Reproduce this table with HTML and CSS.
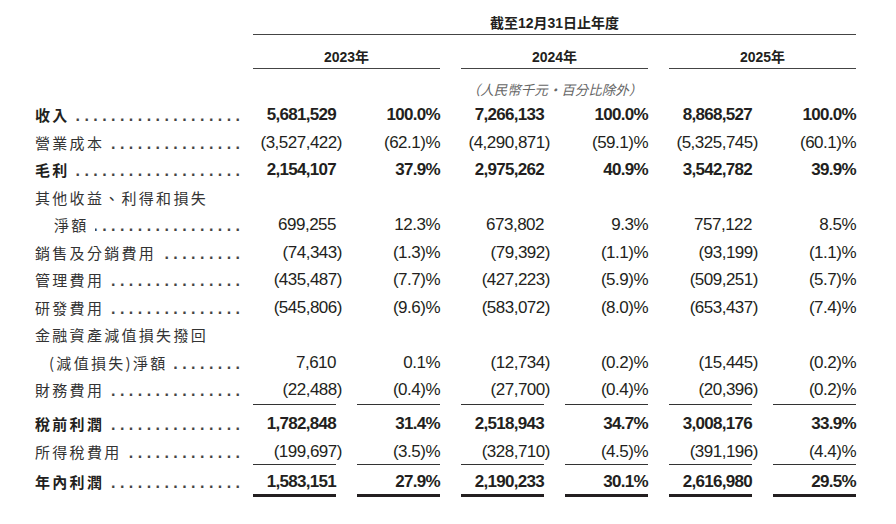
FILE: index.html
```html
<!DOCTYPE html>
<html lang="zh-Hant">
<head>
    <meta charset="UTF-8">
    <meta name="viewport" content="width=device-width, initial-scale=1.0">
    <title>損益表摘要</title>
    <link rel="stylesheet" href="styles.css">
</head>
<body>
    <div class="table">
        <div class="period">截至12月31日止年度</div>

        <div class="year c23">2023年</div>
        <div class="year c24">2024年</div>
        <div class="year c25">2025年</div>

        <div class="unit c24">（人民幣千元・百分比除外）</div>

        <div class="row bold">
            <div class="label"><span>收入</span></div>
            <div class="num">5,681,529</div><div class="num">100.0%</div>
            <div class="num">7,266,133</div><div class="num">100.0%</div>
            <div class="num">8,868,527</div><div class="num">100.0%</div>
        </div>
        <div class="row">
            <div class="label"><span>營業成本</span></div>
            <div class="num">(3,527,422<span class="cp">)</span></div><div class="num">(62.1)%</div>
            <div class="num">(4,290,871<span class="cp">)</span></div><div class="num">(59.1)%</div>
            <div class="num">(5,325,745<span class="cp">)</span></div><div class="num">(60.1)%</div>
        </div>
        <div class="row bold">
            <div class="label"><span>毛利</span></div>
            <div class="num">2,154,107</div><div class="num">37.9%</div>
            <div class="num">2,975,262</div><div class="num">40.9%</div>
            <div class="num">3,542,782</div><div class="num">39.9%</div>
        </div>
        <div class="row">
            <div class="label nolead"><span>其他收益、利得和損失</span></div>
        </div>
        <div class="row">
            <div class="label ind"><span>淨額</span></div>
            <div class="num">699,255</div><div class="num">12.3%</div>
            <div class="num">673,802</div><div class="num">9.3%</div>
            <div class="num">757,122</div><div class="num">8.5%</div>
        </div>
        <div class="row">
            <div class="label"><span>銷售及分銷費用</span></div>
            <div class="num">(74,343<span class="cp">)</span></div><div class="num">(1.3)%</div>
            <div class="num">(79,392<span class="cp">)</span></div><div class="num">(1.1)%</div>
            <div class="num">(93,199<span class="cp">)</span></div><div class="num">(1.1)%</div>
        </div>
        <div class="row">
            <div class="label"><span>管理費用</span></div>
            <div class="num">(435,487<span class="cp">)</span></div><div class="num">(7.7)%</div>
            <div class="num">(427,223<span class="cp">)</span></div><div class="num">(5.9)%</div>
            <div class="num">(509,251<span class="cp">)</span></div><div class="num">(5.7)%</div>
        </div>
        <div class="row">
            <div class="label"><span>研發費用</span></div>
            <div class="num">(545,806<span class="cp">)</span></div><div class="num">(9.6)%</div>
            <div class="num">(583,072<span class="cp">)</span></div><div class="num">(8.0)%</div>
            <div class="num">(653,437<span class="cp">)</span></div><div class="num">(7.4)%</div>
        </div>
        <div class="row">
            <div class="label nolead"><span>金融資產減值損失撥回</span></div>
        </div>
        <div class="row">
            <div class="label ind paren"><span>(減值損失)淨額</span></div>
            <div class="num">7,610</div><div class="num">0.1%</div>
            <div class="num">(12,734<span class="cp">)</span></div><div class="num">(0.2)%</div>
            <div class="num">(15,445<span class="cp">)</span></div><div class="num">(0.2)%</div>
        </div>
        <div class="row rule">
            <div class="label"><span>財務費用</span></div>
            <div class="num">(22,488<span class="cp">)</span></div><div class="num">(0.4)%</div>
            <div class="num">(27,700<span class="cp">)</span></div><div class="num">(0.4)%</div>
            <div class="num">(20,396<span class="cp">)</span></div><div class="num">(0.2)%</div>
        </div>
        <div class="row bold after-rule">
            <div class="label"><span>稅前利潤</span></div>
            <div class="num">1,782,848</div><div class="num">31.4%</div>
            <div class="num">2,518,943</div><div class="num">34.7%</div>
            <div class="num">3,008,176</div><div class="num">33.9%</div>
        </div>
        <div class="row rule tax">
            <div class="label"><span>所得稅費用</span></div>
            <div class="num">(199,697<span class="cp">)</span></div><div class="num">(3.5)%</div>
            <div class="num">(328,710<span class="cp">)</span></div><div class="num">(4.5)%</div>
            <div class="num">(391,196<span class="cp">)</span></div><div class="num">(4.4)%</div>
        </div>
        <div class="row bold total">
            <div class="label"><span>年內利潤</span></div>
            <div class="num">1,583,151</div><div class="num">27.9%</div>
            <div class="num">2,190,233</div><div class="num">30.1%</div>
            <div class="num">2,616,980</div><div class="num">29.5%</div>
        </div>
    </div>
</body>
</html>
```

FILE: styles.css
```css
body { margin: 0; background: #fff; color: #231f20; font-family: "Liberation Sans", "Noto Sans CJK TC", sans-serif; }

.table { display: grid; grid-template-columns: 197px repeat(6, 83px); column-gap: 21px; padding: 12px 0 0 35px; }

/* header */
.period { grid-column: 2 / 8; text-align: center; font-weight: bold; font-size: 14px; line-height: 22px; border-bottom: 1px solid #444; }
.year { text-align: center; font-weight: bold; font-size: 14px; line-height: 22px; padding-top: 11px; border-bottom: 1px solid #444; }
.c23 { grid-column: 2 / 4; }
.c24 { grid-column: 4 / 6; }
.c25 { grid-column: 6 / 8; }
.unit { font-family: "Noto Sans CJK TC", sans-serif; font-style: italic; color: #666; font-size: 13.5px; line-height: 22px; padding: 9px 0 1px; text-align: center; }

/* body rows */
.row { display: contents; }
.row > div { line-height: 27.5px; height: 27.5px; }
.label { grid-column: 1; display: flex; align-items: baseline; margin-right: -8px; font-family: "Noto Sans CJK TC", sans-serif; font-size: 15px; letter-spacing: 2.3px; color: #333; white-space: nowrap; }
.label::after { content: ". . . . . . . . . . . . . . . . . . . . . . . . . . . . . ."; flex: 1; min-width: 0; overflow: hidden; direction: rtl; margin-left: 6px; line-height: 14px; font-family: "Liberation Sans", sans-serif; font-size: 16px; font-weight: bold; letter-spacing: 0; color: #444; }
.label.nolead::after { content: none; }
.label.ind { padding-left: 19px; }
.label.paren { padding-left: 14px; }
.num { text-align: right; font-size: 17px; letter-spacing: -0.5px; white-space: nowrap; }
.cp { margin-right: -0.35em; }

.bold .label, .bold .num { font-weight: bold; color: #231f20; }
.bold .num { letter-spacing: -0.7px; }

.rule .num { border-bottom: 1px solid #333; }
.row.after-rule > div { padding-top: 5px; }
.row.tax > div { line-height: 25px; height: 25px; padding-top: 2px; }
.row.total > div { line-height: 24px; height: 24px; padding-top: 5px; }
.total .num { border-bottom: 3px solid #231f20; box-shadow: 0 4px 0 #fff, 0 5px 0 #231f20; }
```
